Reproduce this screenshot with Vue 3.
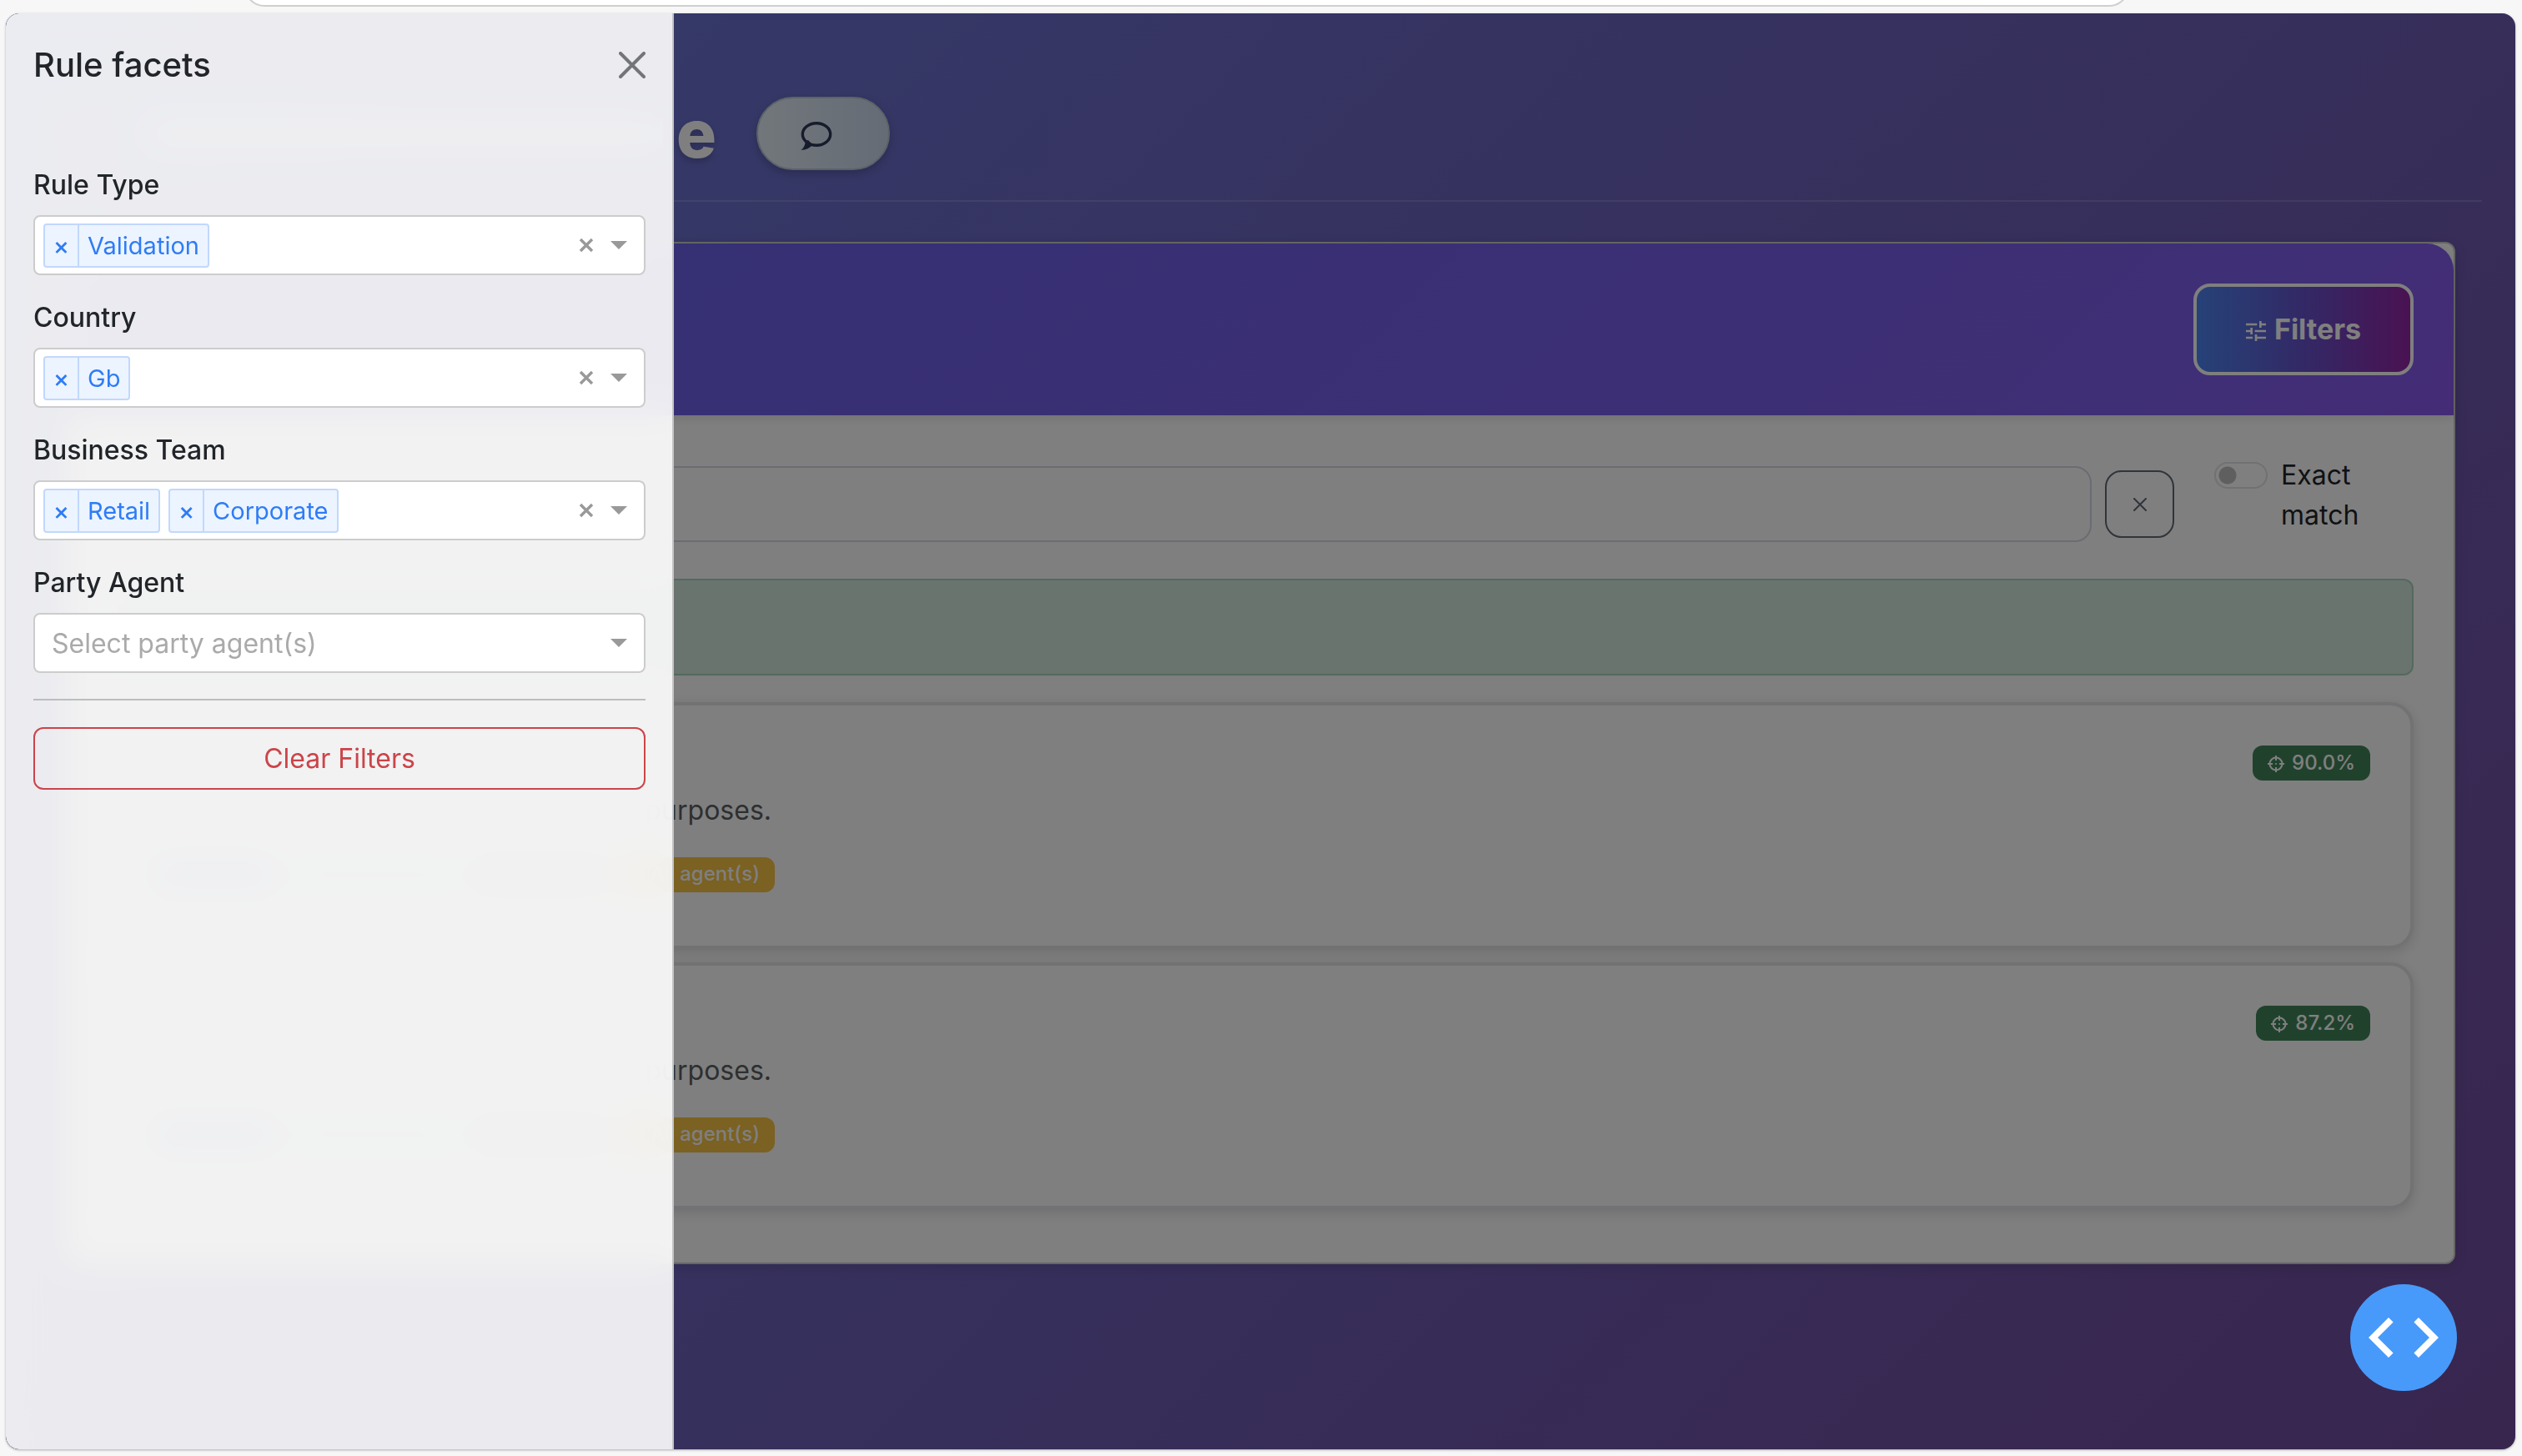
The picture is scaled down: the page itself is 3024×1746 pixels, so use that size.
<script setup>
import { ref } from 'vue'

const facets = ref([
  { id: 'rule-type', label: 'Rule Type', values: ['Validation'], placeholder: '' },
  { id: 'country', label: 'Country', values: ['Gb'], placeholder: '' },
  { id: 'business-team', label: 'Business Team', values: ['Retail', 'Corporate'], placeholder: '' },
  { id: 'party-agent', label: 'Party Agent', values: [], placeholder: 'Select party agent(s)' }
])

const results = [
  { id: 1, score: '90.0%' },
  { id: 2, score: '87.2%' }
]

function removeValue(facet, value) {
  facet.values = facet.values.filter((v) => v !== value)
}

function clearAll() {
  facets.value.forEach((f) => { f.values = [] })
}
</script>

<template>
  <div class="window">
    <div class="toolbar"><div class="address"></div></div>

    <div class="viewport">
      <main class="page">
        <header class="page-header">
          <div class="title">
            <span class="title-icon"></span>
            <span class="title-bar"></span>
            <h1>e</h1>
          </div>
          <button class="comment" type="button" aria-label="Comments">
            <svg width="38" height="36" viewBox="0 0 38 36">
              <ellipse cx="19" cy="16" rx="16.700" ry="13.300" fill="none" stroke="currentColor" stroke-width="3.400" />
              <path d="M5.500 24Q6 30.500 0.500 35Q9.500 34.500 14.500 28.500L9 23Z" fill="currentColor" />
            </svg>
          </button>
        </header>

        <section class="panel">
          <div class="panel-head">
            <button class="filters" type="button">
              <svg width="24" height="24" viewBox="3 3 18 18" fill="currentColor">
                <path d="M3 17v2h6v-2H3zM3 5v2h10V5H3zm10 16v-2h8v-2h-8v-2h-2v6h2zM7 9v2H3v2h4v2h2V9H7zm14 4v-2H11v2h10zm-6-4h2V7h4V5h-4V3h-2v6z" />
              </svg>
              <span>Filters</span>
            </button>
          </div>

          <div class="panel-body">
            <div class="search-row">
              <div class="search">
                <input type="text" aria-label="Search rules" />
                <button type="button" aria-label="Clear search">
                  <svg width="16" height="16" viewBox="0 0 16 16"><path d="M1 1L15 15M15 1L1 15" stroke="currentColor" stroke-width="2" stroke-linecap="round" /></svg>
                </button>
              </div>
              <div class="exact">
                <input id="exact" type="checkbox" role="switch" />
                <label for="exact">Exact match</label>
              </div>
            </div>

            <div class="notice"></div>

            <div class="results">
              <article v-for="r in results" :key="r.id" class="result">
                <div class="result-top">
                  <span class="name-bar"></span>
                  <span class="score">
                    <svg width="20" height="20" viewBox="0 0 20 20" fill="none" stroke="currentColor" stroke-width="2">
                      <circle cx="10" cy="10" r="7.500" />
                      <path d="M10 0V6M10 14V20M0 10H6M14 10H20" />
                      <circle cx="10" cy="10" r="1" stroke="none" fill="currentColor" />
                    </svg>
                    {{ r.score }}
                  </span>
                </div>
                <p>purposes.</p>
                <div class="tags">
                  <span class="tag blue"></span>
                  <span class="tag cyan"></span>
                  <span class="tag gray"></span>
                  <span class="tag amber">All agent(s)</span>
                </div>
              </article>
            </div>
          </div>
        </section>
      </main>

      <div class="scrim"></div>

      <aside class="drawer">
        <div class="drawer-head">
          <h2>Rule facets</h2>
          <button type="button" aria-label="Close">
            <svg width="32" height="32" viewBox="0 0 32 32"><path d="M2 2L30 30M30 2L2 30" stroke="currentColor" stroke-width="4" stroke-linecap="round" /></svg>
          </button>
        </div>

        <form @submit.prevent>
          <div class="facets">
            <div v-for="f in facets" :key="f.id" class="facet">
              <label :for="f.id">{{ f.label }}</label>
              <div class="select">
                <span v-for="v in f.values" :key="v" class="chip">
                  <button type="button" :aria-label="'Remove ' + v" @click="removeValue(f, v)">×</button>
                  <span>{{ v }}</span>
                </span>
                <input :id="f.id" type="text" role="combobox" aria-expanded="false" :placeholder="f.placeholder" />
                <button v-if="f.values.length" class="clear" type="button" aria-label="Clear" @click="f.values = []">
                  <svg width="18" height="18" viewBox="0 0 18 18"><path d="M2 2L16 16M16 2L2 16" stroke="currentColor" stroke-width="3.400" /></svg>
                </button>
                <span class="arrow"></span>
              </div>
            </div>
          </div>
          <hr />
          <button class="clear-filters" type="button" @click="clearAll">Clear Filters</button>
        </form>
      </aside>

      <button class="fab" type="button" aria-label="Developer tools">
        <svg width="128" height="128" viewBox="0 0 128 128" fill="#fff">
          <path d="M22 64L46 40L51.600 45.400L33 64L51.600 82.400L46 88Z" />
          <path d="M106 64L82 40L76.400 45.400L95 64L76.400 82.400L82 88Z" />
        </svg>
      </button>
    </div>
  </div>
</template>

<style>
body {
  margin: 0;
  background: #f7f7f7;
}
</style>

<style scoped>
* {
  box-sizing: border-box;
}

.window {
  display: flex;
  flex-direction: column;
  min-height: 100vh;
  padding: 0 8px 8px 7px;
  font-family: Inter, "Liberation Sans", sans-serif;
  font-size: 32px;
  line-height: 48px;
  color: #212529;
}

button,
input {
  font: inherit;
  color: inherit;
}

button {
  padding: 0;
  border: 0;
  background: none;
  cursor: pointer;
}

h1,
h2,
p {
  margin: 0;
}

svg {
  display: block;
}

.toolbar {
  display: flex;
  align-items: flex-end;
  height: 16px;
  padding: 0 463px 8px 286px;
  overflow: hidden;
}

.address {
  flex: 1;
  height: 64px;
  background: #fff;
  border: 2px solid #cfcfcf;
  border-radius: 24px;
}

.viewport {
  position: relative;
  flex: 1;
  border-radius: 16px;
  overflow: hidden;
  background: linear-gradient(135deg, #697adc 0%, #6a72d0 17%, #6c68c4 35%, #6e5cb4 64%, #7054a8 81%, #704c9e 100%);
  box-shadow: 0 1px 3px rgba(0, 0, 0, 0.3);
}

.page-header {
  display: flex;
  align-items: center;
  gap: 48px;
  margin: 0 40px;
  padding: 100px 0 36px 32px;
  border-bottom: 2px solid rgba(255, 255, 255, 0.16);
}

.title {
  display: flex;
  align-items: center;
  width: 780px;
}

.title-icon {
  width: 48px;
  height: 48px;
  margin-right: 48px;
  border-radius: 24px;
  background: rgba(230, 110, 140, 0.4);
}

.title-bar {
  flex: 1;
  height: 36px;
  margin-right: 16px;
  background: rgba(255, 255, 255, 0.6);
}

h1 {
  font-size: 80px;
  line-height: 88px;
  font-weight: 800;
  color: #fff;
  text-shadow: 0 4px 8px rgba(0, 0, 0, 0.2);
}

.comment {
  display: flex;
  align-items: center;
  width: 160px;
  height: 88px;
  padding-left: 51px;
  border: 2px solid #b8c6d0;
  border-radius: 44px;
  background: linear-gradient(90deg, #e4eef6, #cbd8ec);
  color: #2e3858;
  box-shadow: 0 4px 12px rgba(0, 0, 0, 0.2);
}

.comment svg {
  margin-top: 6px;
}

.panel {
  margin: 48px 72px 96px;
  border: 2px solid #ccccc8;
  border-radius: 12px;
  background: #fff;
  box-shadow: 0 4px 16px rgba(0, 0, 0, 0.12);
}

.panel-head {
  display: flex;
  justify-content: flex-end;
  padding: 48px;
  border-radius: 32px 32px 0 0;
  background: linear-gradient(135deg, #6860e6 0%, #6e60e8 30%, #805eec 90%, #8a58ec 100%);
  box-shadow: 0 4px 12px rgba(0, 0, 0, 0.1);
}

.filters {
  display: flex;
  align-items: center;
  justify-content: center;
  gap: 10px;
  width: 264px;
  height: 110px;
  border: 4px solid #fff;
  border-radius: 20px;
  background: linear-gradient(90deg, #4c84f0, #6652cc 50%, #9424a4);
  background-clip: padding-box;
  color: #fff;
  font-size: 34px;
  font-weight: 700;
}

.filters svg {
  margin-top: 4px;
}

.panel-body {
  padding: 48px 48px 64px;
}

.search-row {
  display: flex;
  align-items: flex-start;
  gap: 48px;
  margin-bottom: 44px;
}

.search {
  display: flex;
  flex: 1;
  align-items: center;
  gap: 16px;
  margin-top: 13px;
}

.search input {
  flex: 1;
  min-width: 0;
  height: 91px;
  padding: 0 32px;
  border: 2px solid #d2d8e4;
  border-radius: 20px;
  background: #fff;
}

.search button {
  display: flex;
  align-items: center;
  justify-content: center;
  width: 83px;
  height: 81px;
  border: 2px solid #606a74;
  border-radius: 20px;
  color: #606a74;
}

.exact {
  display: flex;
  align-items: flex-start;
  gap: 16px;
  width: 239px;
}

.exact input {
  appearance: none;
  flex: none;
  width: 64px;
  height: 32px;
  margin: 8px 0 0;
  border: 2px solid #dee2e6;
  border-radius: 16px;
  background: radial-gradient(circle at 14px 14px, #bfbfbf 10px, transparent 11px) #fff;
}

.notice {
  height: 116px;
  margin-bottom: 32px;
  border: 2px solid #a9d2bc;
  border-radius: 12px;
  background: #d3e9df;
}

.results {
  display: flex;
  flex-direction: column;
  gap: 16px;
}

.result {
  padding: 48px 48px 64px;
  border: 4px solid #e4e5e9;
  border-radius: 28px;
  background: #fff;
  box-shadow: 0 4px 16px rgba(0, 0, 0, 0.14);
}

.result-top {
  display: flex;
  align-items: center;
  justify-content: space-between;
  margin-bottom: 12px;
}

.name-bar {
  width: 220px;
  height: 16px;
  background: #d4d4d4;
}

.score {
  display: flex;
  align-items: center;
  gap: 9px;
  height: 42px;
  padding: 0 18px;
  border-radius: 12px;
  background: #40845a;
  color: #fff;
  font-size: 24px;
  line-height: 40px;
  font-weight: 500;
}

.score svg {
  margin-top: 2px;
}

.result p {
  width: 744px;
  margin-bottom: 32px;
  text-align: right;
  color: #5c5e60;
}

.tags {
  display: flex;
  gap: 16px;
}

.tag {
  height: 42px;
  border-radius: 12px;
  font-size: 24px;
  line-height: 40px;
  font-weight: 500;
  color: #fff;
}

.blue {
  width: 150px;
  background: #a9bdf0;
}

.cyan {
  width: 200px;
  background: #d0e6f2;
}

.gray {
  width: 166px;
  background: #cdcdcd;
}

.amber {
  width: 184px;
  padding-right: 18px;
  background: #f6c244;
  text-align: right;
}

.scrim {
  position: absolute;
  inset: 0;
  background: rgba(0, 0, 0, 0.5);
}

.drawer {
  position: absolute;
  inset: 0 auto 0 0;
  width: 801px;
  padding: 32px 32px 32px 33px;
  border-right: 2px solid #c2c3c4;
  background: rgba(255, 255, 255, 0.9);
  backdrop-filter: blur(20px);
}

.drawer-head {
  display: flex;
  align-items: center;
  justify-content: space-between;
  margin-bottom: 90px;
}

h2 {
  font-size: 40px;
  line-height: 60px;
  font-weight: 500;
}

.drawer-head button {
  color: #737578;
}

.facets {
  display: flex;
  flex-direction: column;
  gap: 27px;
}

.facet {
  display: flex;
  flex-direction: column;
  gap: 12px;
}

.facet label {
  font-weight: 500;
}

.select {
  display: flex;
  align-items: center;
  gap: 10px;
  height: 72px;
  padding: 0 20px 0 10px;
  border: 2px solid #cccccc;
  border-radius: 8px;
  background: #fff;
}

.chip {
  display: flex;
  height: 53px;
  border: 2px solid #c2d8fc;
  border-radius: 4px;
  background: #ecf4ff;
  color: #2e7cf6;
  font-size: 29px;
  line-height: 49px;
}

.chip button {
  width: 41px;
  border-right: 2px solid #c2d8fc;
  font-weight: 500;
}

.chip span {
  padding: 0 10px;
}

.select input {
  flex: 1;
  min-width: 0;
  height: 60px;
  padding: 0 10px;
  border: 0;
  outline: 0;
  background: none;
}

.select input::placeholder {
  color: #aaaaaa;
  opacity: 1;
}

.clear {
  margin-right: 10px;
  color: #999;
}

.arrow {
  border: 10px solid transparent;
  border-top-color: #999;
  border-bottom: 0;
}

hr {
  height: 2px;
  margin: 31px 0 32px;
  border: 0;
  background: #bbbdbe;
}

.clear-filters {
  width: 100%;
  height: 75px;
  border: 2px solid #cb444a;
  border-radius: 12px;
  color: #cb444a;
}

.fab {
  position: absolute;
  right: 70px;
  bottom: 70px;
  border-radius: 50%;
  background: #479af9;
}
</style>
